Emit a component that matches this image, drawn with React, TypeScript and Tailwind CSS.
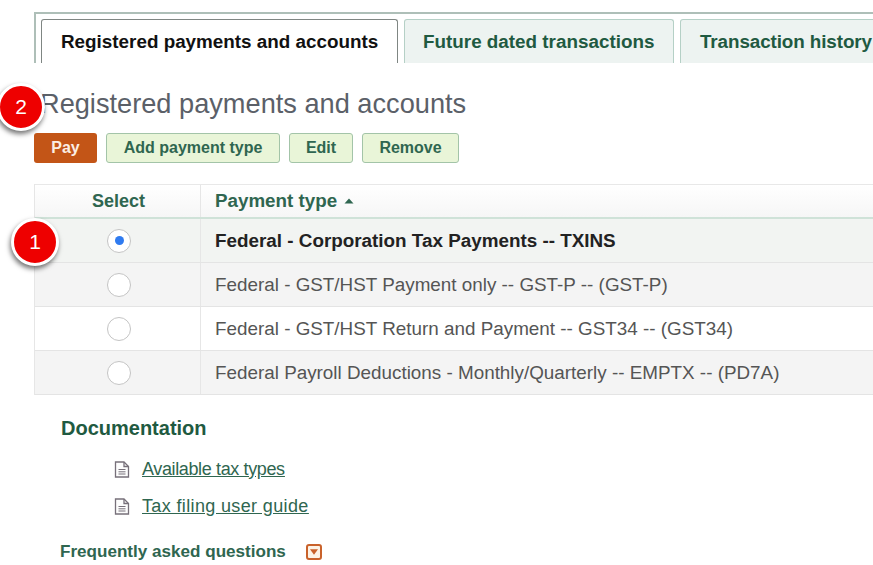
const rows = [
  { label: "Federal - Corporation Tax Payments -- TXINS", selected: true, bg: "bg-[#f2f4f2]" },
  { label: "Federal - GST/HST Payment only -- GST-P -- (GST-P)", selected: false, bg: "bg-[#f4f4f4]" },
  { label: "Federal - GST/HST Return and Payment -- GST34 -- (GST34)", selected: false, bg: "bg-white" },
  { label: "Federal Payroll Deductions - Monthly/Quarterly -- EMPTX -- (PD7A)", selected: false, bg: "bg-[#f4f4f4]" },
]

function Tab({ label, active, className }: { label: string; active?: boolean; className: string }) {
  return (
    <div
      className={`flex h-[44px] shrink-0 items-center rounded-t-[3px] border border-b-0 pt-[2px] text-[18.85px] font-bold ${
        active ? "border-[#7f8683] bg-white text-[#111]" : "border-[#b5d0c6] bg-[#edf3f1] text-[#1f5a41]"
      } ${className}`}
    >
      {label}
    </div>
  )
}

function ActionButton({ label, className }: { label: string; className: string }) {
  return (
    <button className={`flex h-[30px] items-center justify-center rounded-[3px] border border-[#a3c4a8] bg-[#e9f5d8] text-[16px] font-bold text-[#2f6650] ${className}`}>
      {label}
    </button>
  )
}

function Badge({ n, className }: { n: number; className: string }) {
  return (
    <div className={`absolute flex h-[48px] w-[48px] items-center justify-center rounded-full border-[3px] border-white bg-[#ee0000] text-[21px] text-white shadow-[-1px_3px_5px_rgba(0,0,0,0.55)] ${className}`}>
      {n}
    </div>
  )
}

function DocIcon() {
  return (
    <svg width="16" height="17" viewBox="0 0 16 17" fill="none" stroke="#77707a" strokeWidth="1.3" className="shrink-0">
      <path d="M1.5 1h8.5l4.5 4.5V16h-13z" fill="#fdfdfd" />
      <path d="M10 1v4.5h4.5" />
      <path d="M4.5 8.5h7M4.5 10.8h7M4.5 13h7" strokeWidth="1" />
    </svg>
  )
}

export default function App() {
  return (
    <div className="relative h-[565px] w-[873px] overflow-hidden bg-white font-['Liberation_Sans',Arial,sans-serif]">
      <div className="ml-[34px] mt-[12px] flex h-[51px] gap-[6px] border-l-2 border-t-2 border-[#aebfb8] pl-[5px] pt-[5px]">
        <Tab label="Registered payments and accounts" active className="w-[357px] pl-[19px]" />
        <Tab label="Future dated transactions" className="w-[270px] pl-[18px]" />
        <Tab label="Transaction history" className="w-[220px] pl-[19px] tracking-[-0.1px]" />
      </div>

      <h1 className="ml-[40px] mt-[25px] text-[27.2px] leading-[32px] text-[#5b6068]">Registered payments and accounts</h1>

      <div className="ml-[34px] mt-[13px] flex gap-[9px]">
        <button className="flex h-[30px] w-[63px] items-center justify-center rounded-[3px] bg-[#c35517] text-[16px] font-bold text-[#fbeee4]">Pay</button>
        <ActionButton label="Add payment type" className="w-[174px]" />
        <ActionButton label="Edit" className="w-[64px]" />
        <ActionButton label="Remove" className="w-[97px]" />
      </div>

      <div className="ml-[34px] mt-[21px] w-[860px] border-l border-[#e6e6e6]">
        <div className="flex h-[35px] border-b-2 border-t border-b-[#cfe2d8] border-t-[#e8e8e8] bg-gradient-to-b from-white to-[#f6f6f6] font-bold text-[#2f6650]">
          <div className="flex w-[166px] items-center justify-center border-r border-[#e6e6e6] pl-[2px] text-[18px]">Select</div>
          <div className="flex items-center pl-[14px] text-[18.8px]">
            Payment type
            <svg width="10" height="6" viewBox="0 0 10 6" className="ml-[7px]">
              <path d="M5 0.5 9.5 5.5H0.5z" fill="#2f6650" />
            </svg>
          </div>
        </div>
        {rows.map((row) => (
          <div key={row.label} className={`flex h-[44px] border-b border-[#e4e4e4] ${row.bg}`}>
            <div className="flex w-[166px] items-center justify-center border-r border-[#e6e6e6] pl-[3px]">
              <span className="flex h-[24px] w-[24px] items-center justify-center rounded-full border border-[#c4c4c4] bg-white">
                {row.selected && <span className="h-[9px] w-[9px] rounded-full bg-[#2f7bf0]" />}
              </span>
            </div>
            <div className={`flex items-center pl-[14px] pt-[2px] text-[18.85px] ${row.selected ? "font-bold text-[#222]" : "text-[#555]"}`}>
              {row.label}
            </div>
          </div>
        ))}
      </div>

      <h2 className="ml-[61px] mt-[21px] text-[20px] font-bold leading-[24px] text-[#1f5a41]">Documentation</h2>
      <div className="ml-[114px] mt-[18px] flex items-center gap-[12px] text-[18px] leading-[22px] tracking-[-0.37px] text-[#2f6650] underline">
        <DocIcon />
        <a>Available tax types</a>
      </div>
      <div className="ml-[114px] mt-[15px] flex items-center gap-[12px] text-[18px] leading-[22px] tracking-[0.36px] text-[#2f6650] underline">
        <DocIcon />
        <a>Tax filing user guide</a>
      </div>
      <div className="ml-[60px] mt-[25px] flex items-center gap-[20px] text-[17.08px] font-bold leading-[20px] text-[#2f6650]">
        Frequently asked questions
        <span className="flex h-[16px] w-[16px] items-center justify-center rounded-[3px] border-2 border-[#c9622b] bg-[#fdf3e6]">
          <svg width="8" height="6" viewBox="0 0 7 5">
            <path d="M0 0h7L3.5 5z" fill="#c9622b" />
          </svg>
        </span>
      </div>

      <Badge n={1} className="left-[11px] top-[218px]" />
      <Badge n={2} className="left-[-3px] top-[83px]" />
    </div>
  )
}
